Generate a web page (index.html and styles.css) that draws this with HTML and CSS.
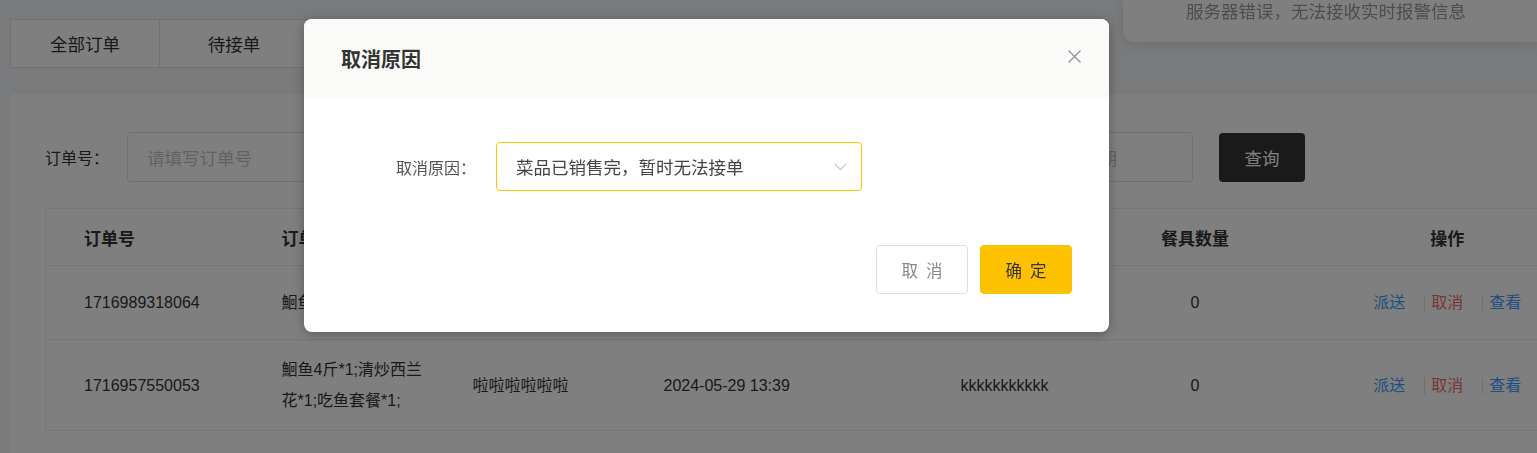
FILE: index.html
```html
<!DOCTYPE html>
<html lang="zh-CN">
<head>
<meta charset="utf-8">
<title>订单管理</title>
<link rel="stylesheet" href="styles.css">
</head>
<body>
<div class="page">
  <div class="tabs">
    <div class="tab">全部订单</div>
    <div class="tab">待接单</div>
    <div class="tab">待派送</div>
    <div class="tab">派送中</div>
    <div class="tab">已完成</div>
    <div class="tab">已取消</div>
  </div>

  <div class="card">
    <div class="search">
      <label class="s-label">订单号：</label>
      <div class="s-input"><span class="ph">请填写订单号</span></div>
      <label class="s-label s-label2">手机号：</label>
      <div class="s-input"><span class="ph">请填写手机号</span></div>
      <label class="s-label s-label3">下单时间：</label>
      <div class="s-input s-date">
        <span class="ph">开始日期</span>
        <span class="sep-to">至</span>
        <span class="ph">结束日期</span>
      </div>
      <button class="btn-query">查询</button>
    </div>

    <table class="grid">
      <colgroup>
        <col class="c1"><col class="c2"><col class="c3"><col class="c4"><col class="c5"><col class="c6"><col class="c7">
      </colgroup>
      <thead>
        <tr>
          <th>订单号</th>
          <th>订单内容</th>
          <th>备注</th>
          <th>下单时间</th>
          <th>收货人</th>
          <th class="center">餐具数量</th>
          <th class="center">操作</th>
        </tr>
      </thead>
      <tbody>
        <tr>
          <td>1716989318064</td>
          <td>鮰鱼4斤*1;</td>
          <td>不要辣</td>
          <td>2024-05-29 21:28</td>
          <td>kkkkkkkkkkk</td>
          <td class="center">0</td>
          <td class="center"><span class="act blue">派送</span><span class="act red">取消</span><span class="act blue">查看</span></td>
        </tr>
        <tr>
          <td>1716957550053</td>
          <td>鮰鱼4斤*1;清炒西兰花*1;吃鱼套餐*1;</td>
          <td>啦啦啦啦啦啦</td>
          <td>2024-05-29 13:39</td>
          <td>kkkkkkkkkkk</td>
          <td class="center">0</td>
          <td class="center"><span class="act blue">派送</span><span class="act red">取消</span><span class="act blue">查看</span></td>
        </tr>
      </tbody>
    </table>
  </div>
</div>

<div class="notice">服务器错误，无法接收实时报警信息</div>

<div class="mask"></div>

<div class="dialog">
  <div class="dlg-head">
    <span class="dlg-title">取消原因</span>
    <svg class="dlg-close" width="13" height="13" viewBox="0 0 13 13"><path d="M0.5 0.5L12.5 12.5M12.5 0.5L0.5 12.5" stroke="#909399" stroke-width="1.3" fill="none"/></svg>
  </div>
  <div class="dlg-body">
    <label class="dlg-label">取消原因：</label>
    <div class="dlg-select">
      <span class="dlg-value">菜品已销售完，暂时无法接单</span>
      <svg class="chev" width="13" height="8" viewBox="0 0 13 8"><path d="M0.8 0.8L6.5 6.6L12.2 0.8" stroke="#c0c4cc" stroke-width="1.2" fill="none"/></svg>
    </div>
  </div>
  <div class="dlg-foot">
    <button class="btn btn-cancel">取消</button>
    <button class="btn btn-ok">确定</button>
  </div>
</div>
</body>
</html>
```
FILE: styles.css
```css
html, body {
  margin: 0;
  padding: 0;
  width: 1537px;
  height: 453px;
  overflow: hidden;
}
body {
  background: #f3f4f8;
  font-family: "Liberation Sans", "Noto Sans CJK SC", sans-serif;
  color: #333;
}
.page {
  padding: 19px 0 0 10px;
}
.tabs {
  display: flex;
}
.tab {
  width: 150px;
  height: 49px;
  box-sizing: border-box;
  border: 1px solid #e2e3e6;
  margin-right: -1px;
  background: #fff;
  display: flex;
  align-items: center;
  justify-content: center;
  font-size: 17.5px;
  color: #333;
}
.card {
  margin-top: 26px;
  width: 1527px;
  overflow: hidden;
  background: #fff;
  border-radius: 4px 0 0 4px;
  padding: 38px 0 40px 35px;
  box-sizing: border-box;
}
.search {
  display: flex;
  align-items: center;
  height: 50px;
}
.s-label {
  flex: none;
  width: 82px;
  font-size: 16px;
  color: #333;
}
.s-label2 { margin-left: 40px; }
.s-label3 { margin-left: 40px; width: 100px; }
.s-input {
  flex: none;
  width: 240px;
  height: 50px;
  box-sizing: border-box;
  border: 1px solid #dcdfe6;
  border-radius: 4px;
  padding-left: 19px;
  display: flex;
  align-items: center;
  font-size: 17.5px;
}
.ph { color: #c0c4cc; }
.s-date {
  width: 324px;
  padding-right: 75px;
  justify-content: space-between;
}
.sep-to { color: #606266; }
.btn-query {
  flex: none;
  margin-left: 26px;
  width: 86px;
  height: 49px;
  border: none;
  border-radius: 4px;
  background: #343434;
  color: #fff;
  font-family: inherit;
  font-size: 17.5px;
}
.grid {
  margin-top: 26px;
  border-collapse: collapse;
  table-layout: fixed;
  width: 1560px;
  border: 1px solid #ebeef5;
  font-size: 16px;
}
.c1 { width: 198px; }
.c2 { width: 191px; }
.c3 { width: 191px; }
.c4 { width: 297px; }
.c5 { width: 178px; }
.c6 { width: 189px; }
.c7 { width: 316px; }
.grid th {
  height: 56px;
  padding: 0 10px 0 38px;
  text-align: left;
  font-weight: 700;
  font-size: 17px;
  color: #333;
  border-bottom: 1px solid #ebeef5;
}
.grid tbody tr { height: 74px; }
.grid td {
  padding: 14px 10px 14px 38px;
  line-height: 31px;
  color: #333;
  border-bottom: 1px solid #ebeef5;
  vertical-align: middle;
}
.grid th.center, .grid td.center {
  text-align: center;
  padding-left: 10px;
}
.act {
  display: inline-block;
  line-height: 16px;
  font-size: 16px;
}
.act + .act {
  margin-left: 19px;
  padding-left: 6px;
  border-left: 1px solid #dcdfe6;
}
.blue { color: #409eff; }
.red { color: #f56c6c; }

.notice {
  position: fixed;
  top: 0;
  left: 1123px;
  right: 0;
  height: 42px;
  box-sizing: border-box;
  padding-left: 63px;
  line-height: 24px;
  background: #fff;
  border-radius: 0 0 0 10px;
  box-shadow: 0 2px 12px rgba(0, 0, 0, 0.12);
  font-size: 17.5px;
  color: #9a9a9a;
}
.mask {
  position: fixed;
  inset: 0;
  background: rgba(0, 0, 0, 0.5);
}
.dialog {
  position: fixed;
  left: 304px;
  top: 19px;
  width: 805px;
  height: 313px;
  background: #fff;
  border-radius: 8px;
  overflow: hidden;
  box-shadow: 0 2px 12px rgba(0, 0, 0, 0.3);
}
.dlg-head {
  height: 79px;
  background: #fafaf8;
  display: flex;
  align-items: center;
  justify-content: space-between;
  padding: 0 28px 0 37px;
}
.dlg-title {
  font-size: 20px;
  font-weight: 700;
  color: #333;
}
.dlg-close {
  margin-top: -4px;
}
.dlg-body {
  display: flex;
  align-items: center;
  padding: 44px 0 0 36px;
}
.dlg-label {
  width: 136px;
  margin-right: 20px;
  text-align: right;
  font-size: 16px;
  color: #555;
}
.dlg-select {
  width: 366px;
  height: 49px;
  box-sizing: border-box;
  border: 1px solid #ffc200;
  border-radius: 4px;
  padding: 0 14px 0 19px;
  display: flex;
  align-items: center;
  justify-content: space-between;
}
.dlg-value {
  font-size: 17.5px;
  color: #444;
}
.dlg-foot {
  display: flex;
  justify-content: flex-end;
  gap: 12px;
  padding-right: 37px;
  margin-top: 54px;
}
.btn {
  width: 92px;
  height: 49px;
  box-sizing: border-box;
  border-radius: 4px;
  font-family: inherit;
  font-size: 16.5px;
  letter-spacing: 8px;
  padding: 0 0 0 8px;
}
.btn-cancel {
  background: #fff;
  border: 1px solid #dcdfe6;
  color: #85888e;
}
.btn-ok {
  background: #ffc200;
  border: 1px solid #ffc200;
  color: #333;
}
```
